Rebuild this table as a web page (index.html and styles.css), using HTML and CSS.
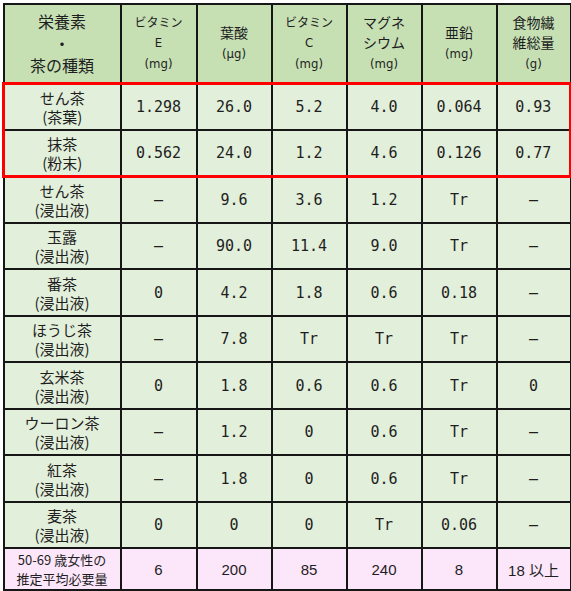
FILE: index.html
```html
<!DOCTYPE html>
<html>
    <head>
        <meta charset="utf-8">
        <link rel="stylesheet" href="styles.css">
    </head>
    <body>
        <table class="tea-table">
            <colgroup>
                <col class="col-name">
                <col class="col-e">
                <col class="col-folic">
                <col class="col-c">
                <col class="col-mg">
                <col class="col-zn">
                <col class="col-fiber">
            </colgroup>
            <thead>
                <tr class="head-row">
                    <th class="head-big">栄養素<br>・<br>茶の種類</th>
                    <th class="head-small">ビタミン<br><span class="num">E</span><br><span class="unit">(mg)</span></th>
                    <th class="head-mid">葉酸<br><span class="unit">(μg)</span></th>
                    <th class="head-small">ビタミン<br><span class="num">C</span><br><span class="unit">(mg)</span></th>
                    <th class="head-mid">マグネ<br>シウム<br><span class="unit">(mg)</span></th>
                    <th class="head-mid">亜鉛<br><span class="unit">(mg)</span></th>
                    <th class="head-mid">食物繊<br>維総量<br><span class="unit">(g)</span></th>
                </tr>
            </thead>
            <tbody class="marked">
                <tr class="row-a">
                    <td class="name">せん茶<br>(茶葉)</td>
                    <td>1.298</td><td>26.0</td><td>5.2</td><td>4.0</td><td>0.064</td><td>0.93</td>
                </tr>
                <tr class="row-b">
                    <td class="name">抹茶<br>(粉末)</td>
                    <td>0.562</td><td>24.0</td><td>1.2</td><td>4.6</td><td>0.126</td><td>0.77</td>
                </tr>
            </tbody>
            <tbody class="plain">
                <tr class="row-a">
                    <td class="name">せん茶<br>(浸出液)</td>
                    <td>–</td><td>9.6</td><td>3.6</td><td>1.2</td><td>Tr</td><td>–</td>
                </tr>
                <tr class="row-b">
                    <td class="name">玉露<br>(浸出液)</td>
                    <td>–</td><td>90.0</td><td>11.4</td><td>9.0</td><td>Tr</td><td>–</td>
                </tr>
                <tr class="row-a">
                    <td class="name">番茶<br>(浸出液)</td>
                    <td>0</td><td>4.2</td><td>1.8</td><td>0.6</td><td>0.18</td><td>–</td>
                </tr>
                <tr class="row-b">
                    <td class="name">ほうじ茶<br>(浸出液)</td>
                    <td>–</td><td>7.8</td><td>Tr</td><td>Tr</td><td>Tr</td><td>–</td>
                </tr>
                <tr class="row-a">
                    <td class="name">玄米茶<br>(浸出液)</td>
                    <td>0</td><td>1.8</td><td>0.6</td><td>0.6</td><td>Tr</td><td>0</td>
                </tr>
                <tr class="row-b">
                    <td class="name">ウーロン茶<br>(浸出液)</td>
                    <td>–</td><td>1.2</td><td>0</td><td>0.6</td><td>Tr</td><td>–</td>
                </tr>
                <tr class="row-a">
                    <td class="name">紅茶<br>(浸出液)</td>
                    <td>–</td><td>1.8</td><td>0</td><td>0.6</td><td>Tr</td><td>–</td>
                </tr>
                <tr class="row-b">
                    <td class="name">麦茶<br>(浸出液)</td>
                    <td>0</td><td>0</td><td>0</td><td>Tr</td><td>0.06</td><td>–</td>
                </tr>
            </tbody>
            <tfoot>
                <tr class="need-row">
                    <td class="need-name">50-69 歳女性の<br>推定平均必要量</td>
                    <td>6</td><td>200</td><td>85</td><td>240</td><td>8</td><td>18 以上</td>
                </tr>
            </tfoot>
        </table>
    </body>
</html>
```

FILE: styles.css
```css
* {
    box-sizing: border-box;
}

body {
    margin: 3px 0 0 2px;
    background-color: white;
    font-family: "Noto Sans CJK JP", sans-serif;
    color: #1e1e1e;
}

.tea-table {
    border-collapse: collapse;
    table-layout: fixed;
    width: 567px;
}

.col-name { width: 117px; }
.col-e { width: 76px; }
.col-folic,
.col-c,
.col-mg,
.col-zn { width: 75px; }
.col-fiber { width: 74px; }

.tea-table th,
.tea-table td {
    border: 2px solid #161616;
    padding: 0;
    text-align: center;
    vertical-align: middle;
}

.head-row {
    height: 79px;
}
.head-row th {
    background-color: #c6e0b4;
    font-weight: normal;
    font-size: 14px;
    line-height: 20px;
}
.head-row .head-big {
    font-size: 16px;
    line-height: 22px;
}
.head-row .head-small {
    font-size: 12px;
}
.head-row .num,
.head-row .unit {
    font-family: "DejaVu Sans Condensed", "Noto Sans CJK JP", sans-serif;
    font-size: 13px;
}

.marked {
    border: 3px solid #ff0000;
}

tbody td {
    background-color: #e2efda;
    font-family: "DejaVu Sans Mono", monospace;
    font-size: 15px;
}
tbody .name {
    font-family: "Noto Sans CJK JP", sans-serif;
    font-size: 15px;
    line-height: 19px;
}
.row-a { height: 47px; }
.row-b { height: 46px; }

.need-row {
    height: 42px;
}
.need-row td {
    background-color: #fce6fa;
    font-family: "Liberation Sans", "Noto Sans CJK JP", sans-serif;
    font-size: 15px;
}
.need-row .need-name {
    font-family: "Noto Sans CJK JP", sans-serif;
    font-size: 13px;
    line-height: 19px;
}
```
